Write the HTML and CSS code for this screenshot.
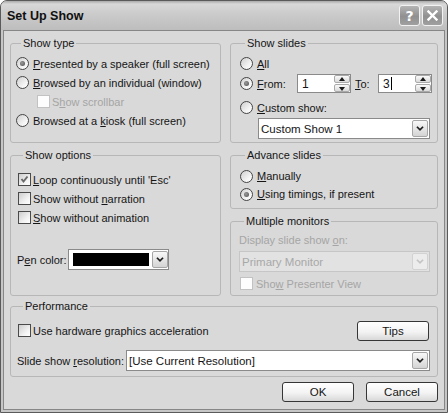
FILE: index.html
```html
<!DOCTYPE html>
<html>
<head>
<meta charset="utf-8">
<link rel="stylesheet" href="styles.css">
</head>
<body>
<div class="window">
  <div class="titlebar">
    <span class="title">Set Up Show</span>
    <div class="tbtns">
      <span class="tbtn help">?</span>
      <span class="tbtn close"><svg width="11" height="11" viewBox="0 0 11 11"><path d="M1.5 1.5 L9.5 9.5 M9.5 1.5 L1.5 9.5" stroke="#fff" stroke-width="2.4" stroke-linecap="square"/></svg></span>
    </div>
  </div>
  <div class="frame">
    <div class="content">
      <div class="grid">
        <fieldset class="group g-type">
          <legend>Show type</legend>
          <div class="row"><span class="radio on"></span><span><u>P</u>resented by a speaker (full screen)</span></div>
          <div class="row"><span class="radio"></span><span><u>B</u>rowsed by an individual (window)</span></div>
          <div class="row sub disabled"><span class="check off"></span><span>S<u>h</u>ow scrollbar</span></div>
          <div class="row"><span class="radio"></span><span>Browsed at a <u>k</u>iosk (full screen)</span></div>
        </fieldset>

        <fieldset class="group g-slides">
          <legend>Show slides</legend>
          <div class="row"><span class="radio"></span><span><u>A</u>ll</span></div>
          <div class="row from">
            <span class="radio on"></span><span class="lbl-from"><u>F</u>rom:</span>
            <span class="spin"><span class="val">1</span><span class="spinbtns"><span class="sb up"></span><span class="sb down"></span></span></span>
            <span class="lbl-to"><u>T</u>o:</span>
            <span class="spin"><span class="val">3<span class="caret"></span></span><span class="spinbtns"><span class="sb up"></span><span class="sb down"></span></span></span>
          </div>
          <div class="row custom"><span class="radio"></span><span><u>C</u>ustom show:</span></div>
          <div class="select sel-custom"><span class="seltext">Custom Show 1</span><span class="ddbtn"><svg width="16" height="15" viewBox="0 0 16 15"><path d="M4.5 5.5 L8 9 L11.5 5.5" fill="none" stroke="#1e1e1e" stroke-width="2"/></svg></span></div>
        </fieldset>

        <fieldset class="group g-options">
          <legend>Show options</legend>
          <div class="row"><span class="check"><svg width="11" height="11" viewBox="0 0 11 11"><path d="M2.5 5 L4.5 7.5 L8.5 2.5" fill="none" stroke="#6a6a6a" stroke-width="2"/></svg></span><span><u>L</u>oop continuously until 'Esc'</span></div>
          <div class="row"><span class="check"></span><span>Show without <u>n</u>arration</span></div>
          <div class="row"><span class="check"></span><span><u>S</u>how without animation</span></div>
          <div class="row pen">
            <span class="lbl-pen">P<u>e</u>n color:</span>
            <span class="picker"><span class="swatch"></span><span class="ddbtn"><svg width="16" height="15" viewBox="0 0 16 15"><path d="M4.5 5.5 L8 9 L11.5 5.5" fill="none" stroke="#1e1e1e" stroke-width="2"/></svg></span></span>
          </div>
        </fieldset>

        <div class="stack">
          <fieldset class="group g-advance">
            <legend>Advance slides</legend>
            <div class="row"><span class="radio"></span><span><u>M</u>anually</span></div>
            <div class="row"><span class="radio on"></span><span><u>U</u>sing timings, if present</span></div>
          </fieldset>
          <fieldset class="group g-monitors">
            <legend>Multiple monitors</legend>
            <div class="dim-label">Display slide show <u>o</u>n:</div>
            <div class="select disabled-sel"><span class="seltext">Primary Monitor</span><span class="ddbtn dis"><svg width="16" height="15" viewBox="0 0 16 15"><path d="M4.5 5.5 L8 9 L11.5 5.5" fill="none" stroke="#c4c4c4" stroke-width="2"/></svg></span></div>
            <div class="row disabled pv"><span class="check off"></span><span>Sho<u>w</u> Presenter View</span></div>
          </fieldset>
        </div>
      </div>

      <fieldset class="group g-perf">
        <legend>Performance</legend>
        <div class="row perf1"><span class="check"></span><span>Use hardware <u>g</u>raphics acceleration</span><button class="btn tips">Tips</button></div>
        <div class="row perf2"><span class="lbl-res">Slide show <u>r</u>esolution:</span>
          <div class="select sel-res"><span class="seltext">[Use Current Resolution]</span><span class="ddbtn"><svg width="16" height="15" viewBox="0 0 16 15"><path d="M4.5 5.5 L8 9 L11.5 5.5" fill="none" stroke="#1e1e1e" stroke-width="2"/></svg></span></div>
        </div>
      </fieldset>

      <div class="actions">
        <button class="btn">OK</button>
        <button class="btn">Cancel</button>
      </div>
    </div>
  </div>
</div>
</body>
</html>
```

FILE: styles.css
```css
* { box-sizing: border-box; }
html, body { margin: 0; padding: 0; background: #ffffff; }
body {
  font-family: "Liberation Sans", Arial, sans-serif;
  font-size: 11px;
  color: #151515;
}
u { text-decoration: underline; text-underline-offset: 1px; }
fieldset { margin: 0; padding: 0; min-width: 0; }

.window {
  width: 448px;
  height: 413px;
  border: 1px solid #5a5a5a;
  border-radius: 7px 7px 0 0;
  background: #c6c6c6;
  display: flex;
  flex-direction: column;
  overflow: hidden;
}

.titlebar {
  height: 29px;
  flex: none;
  display: flex;
  align-items: center;
  padding: 0 4px 0 6px;
  background: linear-gradient(#a9a9a9 0, #d8d8d8 3px, #cbcbcb 45%, #bdbdbd 100%);
}
.title {
  flex: 1;
  font: bold 12.5px "Liberation Sans", Arial, sans-serif;
  color: #101010;
  padding-top: 1px;
}
.tbtns { display: flex; gap: 2px; }
.tbtn {
  width: 21px;
  height: 21px;
  border: 1px solid #f2f2f2;
  border-radius: 3px;
  background: linear-gradient(#b4b4b4, #909090 55%, #a0a0a0);
  display: flex;
  align-items: center;
  justify-content: center;
  color: #ffffff;
  font: bold 14px "DejaVu Sans", sans-serif;
}

.frame {
  flex: 1;
  display: flex;
  padding: 0 2px 2px;
}
.content {
  flex: 1;
  border: 1px solid #878787;
  background: #d9d9d9;
  padding: 6px 6px 7px;
  display: flex;
  flex-direction: column;
}

.grid {
  display: grid;
  grid-template-columns: 211px 208px;
  column-gap: 9px;
  row-gap: 6px;
}

.group {
  border: 1px solid #b7b7b7;
  border-radius: 3px;
}
legend {
  margin-left: 5px;
  padding: 0 2px;
  line-height: 13px;
  color: #151515;
}

.row {
  display: flex;
  align-items: center;
  height: 19px;
  white-space: nowrap;
}

.radio {
  width: 13px;
  height: 13px;
  flex: none;
  border-radius: 50%;
  border: 1px solid #454545;
  background: linear-gradient(135deg, #cfcfcf, #f4f4f4 65%, #ffffff);
  margin-right: 4px;
  position: relative;
}
.radio.on::after {
  content: "";
  position: absolute;
  left: 3px;
  top: 3px;
  width: 5px;
  height: 5px;
  border-radius: 50%;
  background: radial-gradient(circle at 40% 40%, #9a9a9a, #4e4e4e);
}

.check {
  width: 13px;
  height: 13px;
  flex: none;
  border: 1px solid #4a4a4a;
  background: linear-gradient(135deg, #cdcdcd, #f3f3f3 65%, #ffffff);
  margin-right: 2px;
  display: flex;
  align-items: center;
  justify-content: center;
}
.check.off {
  border-color: #c2c2c2;
  background: #fdfdfd;
}
.disabled { color: #a5a5a5; }

/* Show type */
.g-type { padding: 4px 0 12px 5px; }
.g-type .sub { padding-left: 21px; }

/* Show slides */
.g-slides { padding: 4px 0 3px 9px; }
.g-slides .from { height: 21px; }
.lbl-from { width: 40px; }
.lbl-to { width: 23px; margin-left: 4px; }
.spin {
  width: 54px;
  height: 19px;
  border: 1px solid #8a8a8a;
  background: #ffffff;
  display: flex;
  align-items: center;
  padding-left: 4px;
  font-size: 12px;
}
.val { display: flex; align-items: center; }
.caret {
  display: inline-block;
  width: 1px;
  height: 13px;
  background: #000;
  margin-left: 1px;
}
.spinbtns {
  margin-left: auto;
  display: flex;
  flex-direction: column;
  width: 16px;
  height: 17px;
  gap: 1px;
}
.sb {
  flex: 1;
  border: 1px solid #a9a9a9;
  border-radius: 2px;
  background: linear-gradient(#fafafa, #dadada);
  position: relative;
}
.sb::after {
  content: "";
  position: absolute;
  left: 4px;
  width: 0;
  height: 0;
  border-left: 3px solid transparent;
  border-right: 3px solid transparent;
}
.sb.up::after { top: 1px; border-bottom: 4px solid #1a1a1a; }
.sb.down::after { top: 2px; border-top: 4px solid #1a1a1a; }

.g-slides .custom { margin-top: 4px; }

.select {
  display: flex;
  align-items: center;
  height: 21px;
  border: 1px solid #8a8a8a;
  background: #ffffff;
  padding-left: 2px;
  white-space: nowrap;
}
.seltext { flex: 1; font-size: 11.5px; }
.ddbtn {
  width: 16px;
  height: 17px;
  margin-right: 1px;
  border: 1px solid #a6a6a6;
  border-radius: 2px;
  background: linear-gradient(#f8f8f8, #d4d4d4);
  display: flex;
  align-items: center;
  justify-content: center;
  flex: none;
}
.ddbtn.dis { background: #ececec; border-color: #d2d2d2; }
.sel-custom { margin: 1px 0 0 18px; width: 172px; }

/* Show options */
.g-options { padding: 8px 0 0 7px; }
.g-options .pen { margin-top: 22px; margin-left: -1px; height: 21px; }
.lbl-pen { width: 51px; }
.picker {
  width: 101px;
  height: 21px;
  border: 1px solid #8a8a8a;
  background: #ffffff;
  display: flex;
  align-items: center;
  padding-left: 4px;
}
.swatch {
  width: 76px;
  height: 13px;
  background: #000000;
  margin-right: 3px;
}
.picker .ddbtn { margin-right: 0; }

/* Right stack */
.stack {
  display: flex;
  flex-direction: column;
  gap: 6px;
}
.g-advance { padding: 5px 0 5px 9px; }
.g-advance .row { height: 18px; }
.g-monitors { flex: 1; padding: 6px 0 2px 8px; }
.dim-label { line-height: 13px; color: #a5a5a5; }
.disabled-sel {
  margin-top: 4px;
  width: 191px;
  background: #e2e2e2;
  border-color: #c6c6c6;
  color: #a8a8a8;
}
.pv { margin-top: 2px; margin-left: 1px; }
.pv .check { margin-right: 3px; }

/* Performance */
.g-perf { margin-top: 4px; padding: 7px 7px 5px 7px; }
.perf1 { height: 21px; }
.perf2 { height: 21px; margin-top: 9px; margin-left: -1px; }
.lbl-res { width: 109px; }
.sel-res { flex: 1; }

.btn {
  width: 72px;
  height: 20px;
  border: 1px solid #363636;
  border-radius: 3px;
  background: linear-gradient(#ffffff, #f3f3f3 55%, #d8d8d8);
  font-family: "Liberation Sans", Arial, sans-serif;
  font-size: 11.5px;
  color: #151515;
  padding: 0;
}
.tips { margin-left: auto; margin-right: 1px; }

.actions {
  margin-top: 5px;
  display: flex;
  justify-content: flex-end;
  gap: 12px;
}
```
